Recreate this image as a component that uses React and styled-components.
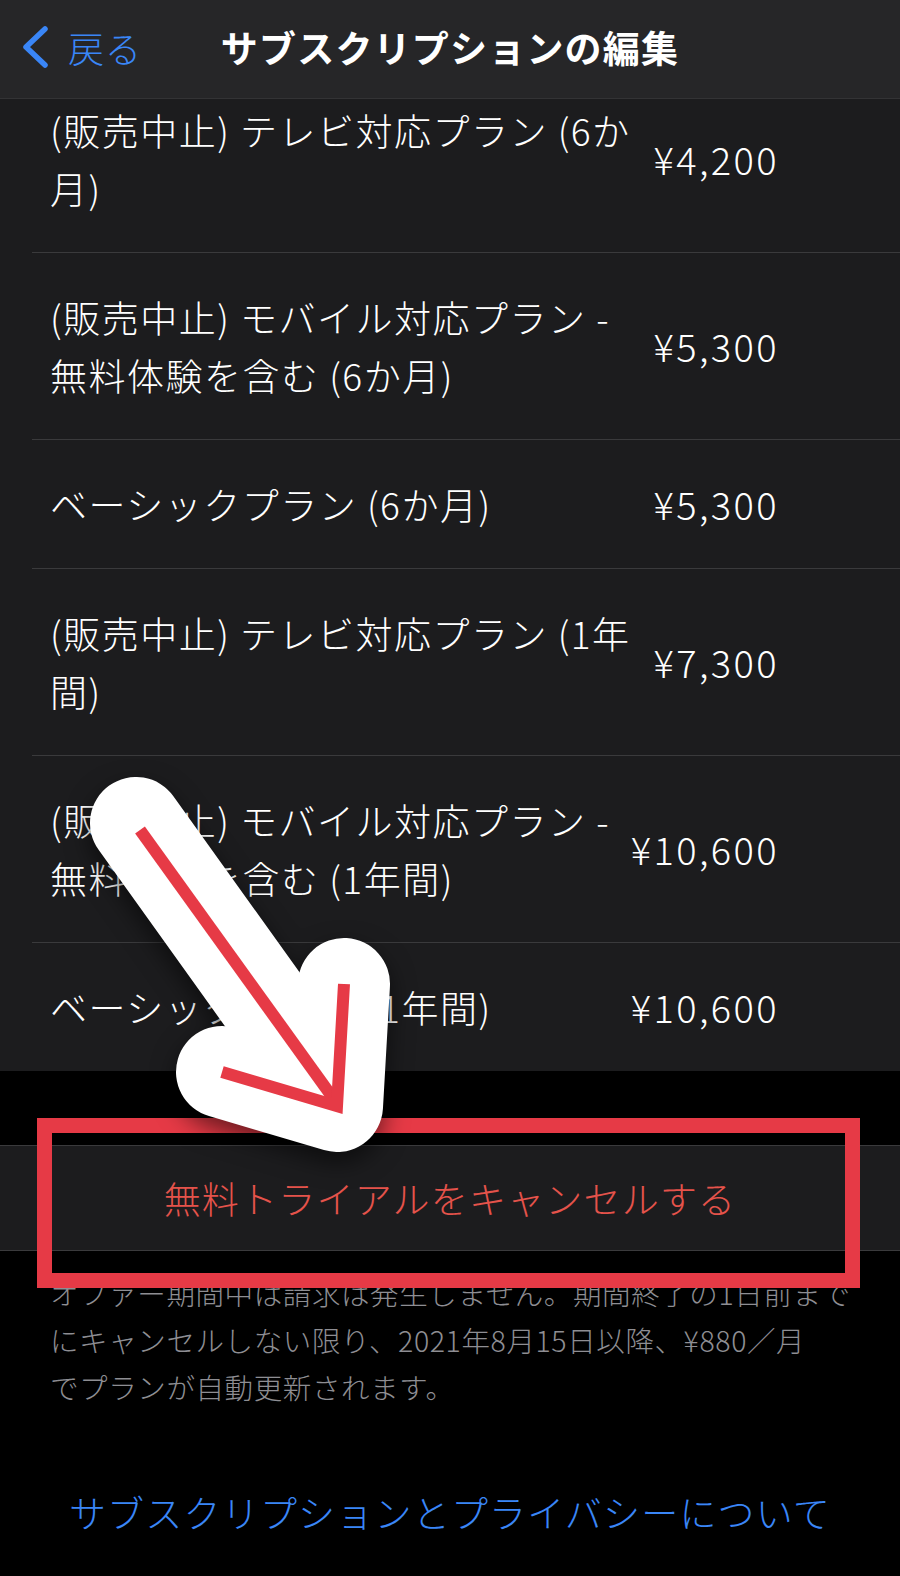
import styled, { createGlobalStyle } from "styled-components";

const GlobalStyle = createGlobalStyle`
  html, body {
    margin: 0;
    padding: 0;
    background: #000;
  }
  body {
    font-family: "Noto Sans CJK JP", "Noto Sans", sans-serif;
    -webkit-font-smoothing: antialiased;
  }
`

const Page = styled.div`
  position: relative;
  width: 900px;
  min-height: 1576px;
  background: #000;
  overflow: hidden;
`

const NavBar = styled.div`
  height: 98px;
  background: #262628;
  border-bottom: 1px solid #333335;
  display: grid;
  grid-template-columns: 1fr auto 1fr;
  align-items: center;
`

const BackButton = styled.div`
  display: flex;
  align-items: center;
  gap: 18px;
  padding-left: 20px;
  color: #3a86f7;
  font-size: 36px;
  font-weight: 300;
  letter-spacing: 1px;
  line-height: 1;
  margin-top: -4px;
`

const Title = styled.div`
  color: #fff;
  font-size: 37px;
  font-weight: 700;
  letter-spacing: 1.2px;
  margin-top: -4px;
`

const List = styled.div`
  background: #1c1c1e;
`

const Row = styled.div`
  display: flex;
  align-items: center;
  margin-left: 32px;
  padding: ${p => (p.$cut ? "2px" : "35px")} 121px 35px 18px;
  border-bottom: ${p => (p.$last ? "none" : "1px solid #3a3a3c")};
`

const Label = styled.div`
  flex: 1;
  color: #fff;
  font-size: 37px;
  font-weight: 300;
  letter-spacing: 1.5px;
  line-height: 58px;
  white-space: nowrap;
`

const Price = styled.div`
  color: #fff;
  font-size: 38px;
  font-weight: 300;
  letter-spacing: 2.4px;
  line-height: 58px;
  white-space: nowrap;
`

const Cell = styled.div`
  margin-top: 74px;
  height: 104px;
  background: #1c1c1e;
  border-top: 1px solid #3a3a3c;
  border-bottom: 1px solid #3a3a3c;
  display: flex;
  align-items: center;
  justify-content: center;
  color: #e5534b;
  font-size: 37px;
  font-weight: 300;
  letter-spacing: 1.2px;
`

const Footnote = styled.p`
  margin: 0;
  padding: 18px 50px 0;
  color: #8e8e93;
  font-size: 28.5px;
  font-weight: 300;
  letter-spacing: 0.6px;
  line-height: 47px;
  white-space: nowrap;
`

const PrivacyLink = styled.div`
  margin-top: 73px;
  text-align: center;
  color: #3a86f7;
  font-size: 37px;
  font-weight: 300;
  letter-spacing: 1.2px;
  line-height: 58px;
`

const Highlight = styled.div`
  position: absolute;
  left: 37px;
  top: 1118px;
  width: 823px;
  height: 170px;
  box-sizing: border-box;
  border: 15px solid #e63a46;
  pointer-events: none;
`

const ArrowLayer = styled.svg`
  position: absolute;
  left: 0;
  top: 0;
  pointer-events: none;
  filter: drop-shadow(0 10px 12px rgba(0, 0, 0, 0.55));
`

const plans = [
  { lines: ["(販売中止) テレビ対応プラン (6か", "月)"], price: "¥4,200" },
  { lines: ["(販売中止) モバイル対応プラン -", "無料体験を含む (6か月)"], price: "¥5,300" },
  { lines: ["ベーシックプラン (6か月)"], price: "¥5,300" },
  { lines: ["(販売中止) テレビ対応プラン (1年", "間)"], price: "¥7,300" },
  { lines: ["(販売中止) モバイル対応プラン -", "無料体験を含む (1年間)"], price: "¥10,600" },
  { lines: ["ベーシックプラン (1年間)"], price: "¥10,600" },
]

function Chevron() {
  return (
    <svg width="30" height="44" viewBox="0 0 30 44">
      <path d="M25 4 L6 22 L25 40" fill="none" stroke="#3a86f7" strokeWidth="5.5" strokeLinecap="round" strokeLinejoin="round" />
    </svg>
  )
}

function Arrow() {
  const shaft = "M140 830 L333 1098"
  const head = "M222 1072 L337 1106 L344 984"
  return (
    <ArrowLayer width="900" height="1576" viewBox="0 0 900 1576">
      <g fill="none" stroke="#fff" strokeLinecap="round" strokeLinejoin="round" strokeWidth="92">
        <path d="M136 823 L333 1098" />
        <path d={head} />
      </g>
      <g fill="none" stroke="#e63a46" strokeLinecap="butt" strokeLinejoin="miter" strokeWidth="12">
        <path d={shaft} />
        <path d={head} />
      </g>
    </ArrowLayer>
  )
}

export default function App() {
  return (
    <>
      <GlobalStyle />
      <Page>
        <NavBar>
          <BackButton>
            <Chevron />
            <span>戻る</span>
          </BackButton>
          <Title>サブスクリプションの編集</Title>
          <div />
        </NavBar>
        <List>
          {plans.map((p, i) => (
            <Row key={i} $cut={i === 0} $last={i === plans.length - 1}>
              <Label>
                {p.lines.map((l, j) => (
                  <div key={j}>{l}</div>
                ))}
              </Label>
              <Price>{p.price}</Price>
            </Row>
          ))}
        </List>
        <Cell>無料トライアルをキャンセルする</Cell>
        <Footnote>
          オファー期間中は請求は発生しません。期間終了の1日前まで
          <br />
          にキャンセルしない限り、2021年8月15日以降、¥880／月
          <br />
          でプランが自動更新されます。
        </Footnote>
        <PrivacyLink>サブスクリプションとプライバシーについて</PrivacyLink>
        <Highlight />
        <Arrow />
      </Page>
    </>
  )
}
